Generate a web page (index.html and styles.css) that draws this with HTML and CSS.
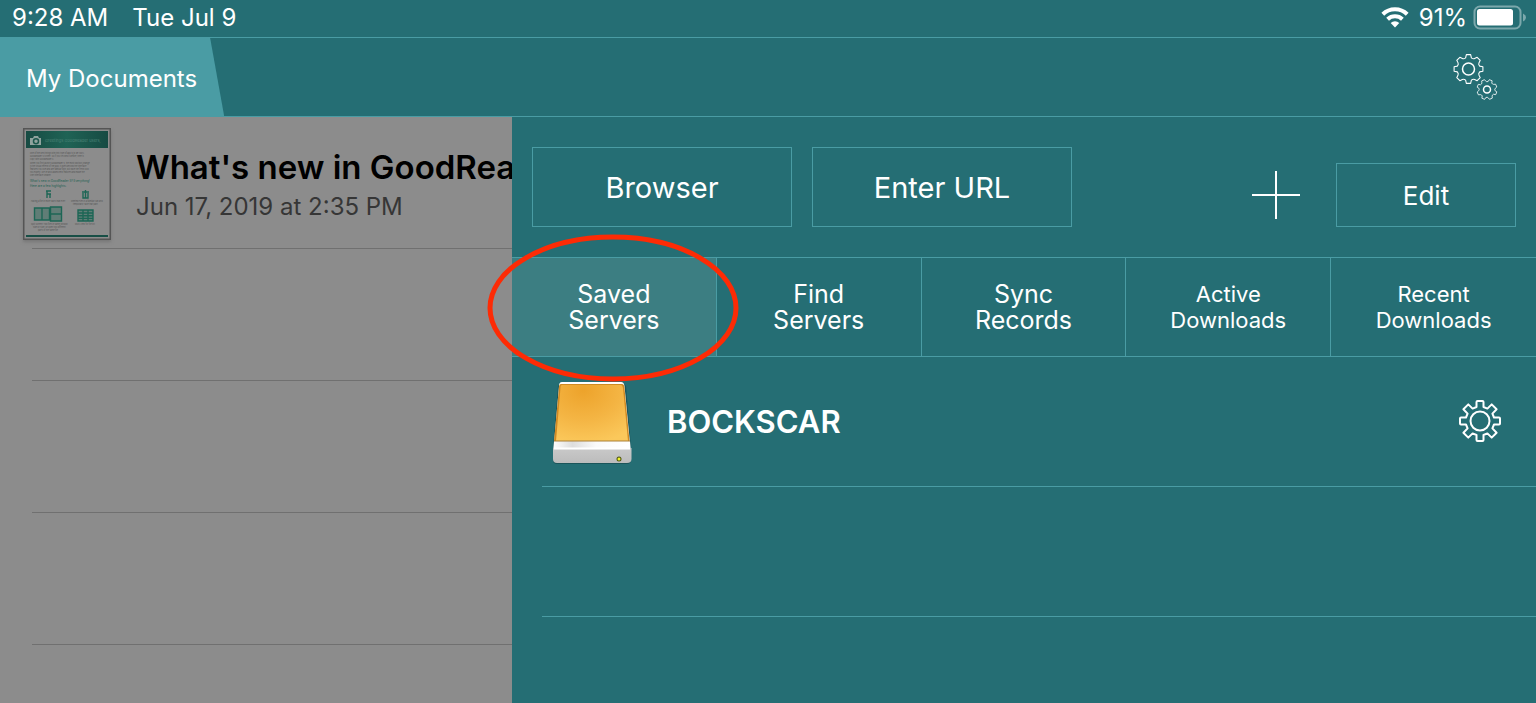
FILE: index.html
```html
<!DOCTYPE html>
<html lang="en">
<head>
<meta charset="utf-8">
<meta name="viewport" content="width=device-width, initial-scale=1">
<title>My Documents</title>
<link rel="stylesheet" href="styles.css">
</head>
<body>
<svg class="defs" aria-hidden="true">
  <defs>
    <path id="gear" d="M-3.5-14V-19Q-3.5-20-2.5-20H2.5Q3.5-20 3.5-19V-14L7.4-12.4 11.7-16.6 16.6-11.7 12.4-7.4 14-3.5H19Q20-3.5 20-2.5V2.5Q20 3.5 19 3.5H14L12.4 7.4 16.6 11.7 11.7 16.6 7.4 12.4 3.5 14V19Q3.5 20 2.5 20H-2.5Q-3.5 20-3.5 19V14L-7.4 12.4-11.7 16.6-16.6 11.7-12.4 7.4-14 3.5H-19Q-20 3.5-20 2.5V-2.5Q-20-3.5-19-3.5H-14L-12.4-7.4-16.6-11.7-11.7-16.6-7.4-12.4Z"/>
    <path id="soft-gear" d="M-3-20H3L4-15.5Q6.5-13.5 8.5-14.5L12-16.3 16.3-12 14.5-8.5Q13.5-6.5 15.5-4L20-3V3L15.5 4Q13.5 6.5 14.5 8.5L16.3 12 12 16.3 8.5 14.5Q6.5 13.5 4 15.5L3 20H-3L-4 15.5Q-6.5 13.5-8.5 14.5L-12 16.3-16.3 12-14.5 8.5Q-13.5 6.5-15.5 4L-20 3V-3L-15.5-4Q-13.5-6.5-14.5-8.5L-16.3-12-12-16.3-8.5-14.5Q-6.5-13.5-4-15.5Z"/>
  </defs>
</svg>

<header class="header">
  <div class="status">
    <time class="status-time">9:28 AM</time>
    <span class="status-date">Tue Jul 9</span>
    <svg class="wifi" viewBox="0 0 28 21" aria-label="Wi-Fi">
      <path class="wifi-arc" d="M1.8 7.2A17.5 17.5 0 0 1 26.2 7.2M6.6 12.2A10.8 10.8 0 0 1 21.4 12.2"/>
      <path class="wifi-dot" d="M14 20.500L9.700 16A6.200 6.200 0 0 1 18.300 16Z"/>
    </svg>
    <span class="status-level">91%</span>
    <svg class="battery" viewBox="0 0 54 25" aria-label="Battery">
      <rect class="battery-case" x="1.500" y="1.500" width="46" height="22" rx="5.500"/>
      <rect class="battery-fill" x="4" y="4" width="36" height="16.500" rx="2.500"/>
      <path class="battery-nub" d="M50 8.500Q53 10 53 12.500T50 16.500Z"/>
    </svg>
  </div>
  <nav class="nav">
    <a class="nav-tab" href="#documents">My Documents</a>
    <button class="icon-button settings" type="button" aria-label="Settings">
      <svg class="gears" viewBox="0 0 48 48">
        <use href="#soft-gear" class="gear-line" transform="translate(16.500 16) scale(.72)"/>
        <circle class="gear-line" cx="16.500" cy="16" r="6"/>
        <use href="#soft-gear" class="gear-line" transform="translate(35 36.500) rotate(22) scale(.5)"/>
        <circle class="gear-line" cx="35" cy="36.500" r="3.500"/>
      </svg>
    </button>
  </nav>
</header>

<main class="main">
  <section class="files" id="documents" aria-label="My Documents">
    <ul class="file-list">
      <li class="file">
        <svg class="thumb" viewBox="0 0 88 112" aria-hidden="true">
          <defs>
            <linearGradient id="banner" x2="1"><stop offset="0" stop-color="#174b43"/><stop offset=".5" stop-color="#1f6355"/><stop offset="1" stop-color="#174b43"/></linearGradient>
          </defs>
          <rect class="thumb-page" x=".5" y=".5" width="87" height="111"/>
          <rect x="3" y="3" width="82" height="17" fill="url(#banner)"/>
          <path class="thumb-camera" d="M7 10h3l1-2h4l1 2h2v7H7z"/>
          <circle class="thumb-lens" cx="13" cy="13.200" r="2.500"/>
          <text class="thumb-title" x="22" y="14">Greetings GoodReader users,</text>
          <g class="thumb-body">
            <text x="7" y="26">One of the best things with this type of app is to be 100%</text>
            <text x="7" y="29">GoodReader 5 is here. So if you've used it before, here is</text>
            <text x="7" y="32">copy with GoodReader 4.</text>
            <text x="7" y="36">When you first launch GoodReader 5, the most obvious change</text>
            <text x="7" y="39">is the visual refresh of the app. It goes beyond the interface</text>
            <text x="7" y="42">features you love and are familiar with, but have the fresh look</text>
            <text x="7" y="45">you expect. We've also added new features and made the</text>
            <text x="7" y="48">user interface cleaner.</text>
            <text x="8" y="74">Having a file in more ways than ever</text>
            <text x="48" y="74">Deleted Files is a familiar can and</text>
            <text x="50" y="77">temporarily save that path</text>
            <text x="8" y="97">Split Screen! Two files in same window</text>
            <text x="10" y="100">side by side. Or open two different</text>
            <text x="15" y="103">parts of the same file</text>
            <text x="52" y="97">Multi-view for file list</text>
          </g>
          <g class="thumb-heading">
            <text x="7" y="54">What's new in GoodReader 5? Everything!</text>
            <text x="7" y="59">Here are a few highlights:</text>
          </g>
          <path class="thumb-art" d="M24 63v7M23 63h5M24 66h4M27 66v4M59 64h7M60 65v5h5v-5M62.500 62v8M11.500 80h15v12h-15zM19 80v12M27.500 79h11v14h-11zM27.500 86h11M55 82h15v11H55zM55 85h15M55 87.700h15M55 90.400h15M60 82v11M65 82v11"/>
          <path class="thumb-shade" d="M12 80h14v12H12zM28 79h10v14H28zM55 82h15v11H55z"/>
          <rect class="thumb-footer" x="3" y="107" width="82" height="2"/>
        </svg>
        <div class="file-text">
          <h2 class="file-name">What's new in GoodReader 5</h2>
          <p class="file-date">Jun 17, 2019 at 2:35 PM</p>
        </div>
      </li>
      <li class="file"></li>
      <li class="file"></li>
      <li class="file"></li>
    </ul>
  </section>

  <section class="connect" aria-label="Connect">
    <div class="toolbar">
      <button class="box-button large" type="button">Browser</button>
      <button class="box-button large" type="button">Enter URL</button>
      <button class="icon-button add" type="button" aria-label="Add">
        <svg class="plus" viewBox="0 0 48 48"><path d="M0 24H48M24 0V48"/></svg>
      </button>
      <button class="box-button" type="button">Edit</button>
    </div>
    <div class="tabs">
      <button class="tab selected" type="button">Saved<br>Servers
        <svg class="highlight" viewBox="0 0 254 150" aria-hidden="true"><ellipse cx="127" cy="75" rx="123" ry="71"/></svg>
      </button>
      <button class="tab" type="button">Find<br>Servers</button>
      <button class="tab" type="button">Sync<br>Records</button>
      <button class="tab small" type="button">Active<br>Downloads</button>
      <button class="tab small" type="button">Recent<br>Downloads</button>
    </div>
    <ul class="server-list">
      <li class="server">
        <svg class="drive" viewBox="0 -1 80 84" aria-hidden="true">
          <defs>
            <radialGradient id="amber" cx=".38" cy=".1" r=".95"><stop offset="0" stop-color="#eda32b"/><stop offset=".55" stop-color="#f4b544"/><stop offset="1" stop-color="#fbc85b"/></radialGradient>
            <linearGradient id="shell" x2="1"><stop offset="0" stop-color="#fff"/><stop offset=".25" stop-color="#ddd"/><stop offset=".55" stop-color="#fafafa"/><stop offset="1" stop-color="#fff"/></linearGradient>
            <linearGradient id="front" y2="1" x2="0"><stop offset="0" stop-color="#c9c9c9"/><stop offset="1" stop-color="#bcbcbc"/></linearGradient>
          </defs>
          <path d="M10 1H70L74 5 79 66V79Q79 83 75 83H5Q1 83 1 79V66L6 5Z" fill="#1b555a"/>
          <path d="M10 1H69Q72 1 72.500 5L78 62H2L7 5Q7 1 10 1Z" fill="#fff"/>
          <path d="M9 3H70Q72 3 72.400 6L77.500 60H2L7 6Q7.200 3 9 3Z" fill="#d08a22"/>
          <path d="M10 4H69Q70.500 4 71 7L76 60H4L8.500 7Q8.500 4 10 4Z" fill="url(#amber)"/>
          <path d="M2 60H78L79 71H1Z" fill="url(#shell)"/>
          <path d="M2 60H78" stroke="#a98039" fill="none"/>
          <path d="M1 67H79.500V78Q79.500 82 75 82H5Q1 82 1 78Z" fill="url(#front)"/>
          <path d="M2 67.500H78" stroke="#fff" stroke-width="2" fill="none"/>
          <circle cx="67" cy="78" r="2.500" fill="#4e5412"/>
          <circle cx="67" cy="78" r="1.500" fill="#eef22a"/>
        </svg>
        <h2 class="server-name">BOCKSCAR</h2>
        <button class="icon-button" type="button" aria-label="Server settings">
          <svg class="server-gear" viewBox="-22 -21 44 44">
            <use href="#gear" class="gear-line bold"/>
            <circle class="gear-line bold" r="9.500"/>
          </svg>
        </button>
      </li>
      <li class="server"></li>
    </ul>
  </section>
</main>
</body>
</html>
```
FILE: styles.css
```css
* { box-sizing: border-box; }

body {
  margin: 0;
  height: 100vh;
  display: flex;
  flex-direction: column;
  background: #256e74;
  color: #fff;
  font-family: Inter, "Liberation Sans", sans-serif;
}

h2, p, ul { margin: 0; padding: 0; }
li { list-style: none; }
svg { display: block; flex: none; }
button {
  margin: 0;
  padding: 0;
  border: 0;
  background: none;
  color: inherit;
  font: inherit;
}

.defs { position: absolute; width: 0; height: 0; }

.status {
  display: flex;
  align-items: center;
  height: 38px;
  padding: 0 9px 3px 12px;
  border-bottom: 1px solid #4a9ca4;
  font-size: 24px;
}
.status-date { margin-left: 24px; }
.wifi { width: 28px; height: 21px; margin-left: auto; }
.wifi-arc { fill: none; stroke: #fff; stroke-width: 4; }
.wifi-dot { fill: #fff; }
.status-level { margin: 0 6px 0 10px; }
.battery { width: 54px; height: 25px; }
.battery-case { fill: none; stroke: #7ca8ac; stroke-width: 2; }
.battery-fill { fill: #fff; }
.battery-nub { fill: #7ca8ac; }

.nav {
  display: flex;
  align-items: center;
  justify-content: space-between;
  height: 79px;
  padding-right: 36px;
  border-bottom: 1px solid #4a9ca4;
}
.nav-tab {
  align-self: stretch;
  display: flex;
  align-items: center;
  padding: 2px 27px 0 26px;
  background: #4a9ca4;
  clip-path: polygon(0 0, calc(100% - 14px) 0, 100% 100%, 0 100%);
  color: #fff;
  font-size: 24px;
  text-decoration: none;
}
.gears { width: 48px; height: 48px; }
.gear-line { fill: none; stroke: #fff; stroke-width: 1.5px; stroke-linejoin: round; vector-effect: non-scaling-stroke; }
.gear-line.bold { stroke-width: 2px; }

.main {
  flex: 1;
  display: grid;
  grid-template-columns: 1fr 2fr;
}

.files { min-width: 0; overflow: hidden; background: #8c8c8c; color: #000; }
.file {
  display: flex;
  height: 132px;
  margin-left: 32px;
  border-bottom: 1px solid #707070;
}
.thumb { width: 88px; height: 112px; margin: 11px 25px 0 -9px; box-shadow: 0 2px 3px #777; }
.thumb-page { fill: #8c8c8c; stroke: #555; stroke-width: 2px; }
.thumb-camera { fill: #8fa39e; }
.thumb-lens { fill: #8fa39e; stroke: #1d584d; stroke-width: 1.5px; }
.thumb-title { fill: #4c8579; font-size: 4px; }
.thumb-body { fill: #555; font-size: 2px; }
.thumb-heading { fill: #206050; font-size: 3px; }
.thumb-art { fill: none; stroke: #1d6655; stroke-width: 1.4px; }
.thumb-shade { fill: #1d6655; opacity: .4; }
.thumb-footer { fill: #184f46; }
.file-text { padding-top: 29px; white-space: nowrap; }
.file-name { font-size: 33px; line-height: 42px; font-weight: 600; }
.file-date { margin-top: 4px; font-size: 24px; line-height: 30px; color: #363636; }

.connect { min-width: 0; }
.toolbar {
  display: flex;
  align-items: flex-end;
  gap: 20px;
  padding: 30px 20px;
}
.box-button {
  width: 180px;
  height: 64px;
  border: 1px solid #4a9ca4;
  font-size: 26px;
}
.box-button.large { width: 260px; height: 80px; font-size: 29px; }
.add { margin: 0 16px 8px auto; }
.plus { width: 48px; height: 48px; fill: none; stroke: #fff; stroke-width: 2px; }

.tabs {
  display: grid;
  grid-template-columns: repeat(5, 1fr);
  height: 100px;
  border: solid #4a9ca4;
  border-width: 1px 0;
}
.tab { border-right: 1px solid #4a9ca4; font-size: 25px; line-height: 26px; }
.tab:last-child { border-right: 0; }
.tab.small { font-size: 22px; }
.tab.selected { position: relative; background: #3c7e82; }
.highlight {
  position: absolute;
  z-index: 1;
  left: -26px;
  top: -25px;
  width: 254px;
  height: 150px;
  fill: none;
  stroke: #fd2b05;
  stroke-width: 5px;
  pointer-events: none;
}

.server {
  display: flex;
  align-items: center;
  height: 130px;
  margin-left: 30px;
  padding: 0 34px 0 10px;
  border-bottom: 1px solid #4a9ca4;
}
.drive { width: 80px; height: 84px; }
.server-name { margin-left: 35px; font-size: 31px; font-weight: 600; }
.server .icon-button { margin-left: auto; }
.server-gear { width: 44px; height: 44px; }
```
